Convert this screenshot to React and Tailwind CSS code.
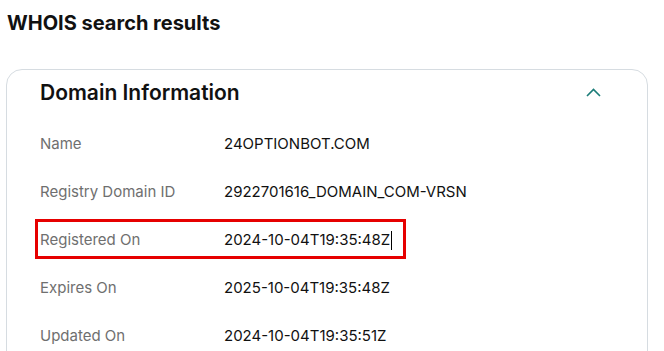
const rows = [
  { label: 'Name', value: '24OPTIONBOT.COM' },
  { label: 'Registry Domain ID', value: '2922701616_DOMAIN_COM-VRSN' },
  { label: 'Registered On', value: '2024-10-04T19:35:48Z', marked: true },
  { label: 'Expires On', value: '2025-10-04T19:35:48Z' },
  { label: 'Updated On', value: '2024-10-04T19:35:51Z' },
]

const App = () => {
  return (
    <div className="w-[664px] h-[351px] overflow-hidden bg-white font-['Inter',sans-serif] text-[#111]">
      {/* Page title */}
      <h1 className="pl-[7px] pt-[11px] text-[20px] leading-[24px] font-bold tracking-[0px]">
        WHOIS search results
      </h1>

      {/* Card */}
      <div className="ml-[6px] mt-[34px] w-[642px] h-[300px] border border-[#d6dce1] rounded-[16px] bg-white">
        <div className="flex items-center justify-between h-[44px] pl-[33px] pr-[46px]">
          <h2 className="text-[21px] font-semibold leading-[28px] mt-[1px]">Domain Information</h2>
          <svg width="15" height="9" viewBox="0 0 15 9" className="mt-[1px]">
            <polyline points="1,8 7.5,1.5 14,8" fill="none" stroke="#1b7c78" strokeWidth="1.6" />
          </svg>
        </div>

        <div className="mt-[6px]">
          {rows.map((row) => (
            <div key={row.label} className="relative flex items-center h-[48px] pl-[33px] text-[15px]">
              <span className="w-[184px] text-[#6f6f6f]">{row.label}</span>
              <span className="text-[#111] flex items-center">
                {row.value}
                {row.marked && <span className="ml-[1px] w-px h-[19px] bg-black" />}
              </span>
              {row.marked && (
                <div className="absolute left-[28px] top-[3px] w-[371px] h-[40px] border-[3px] border-[#e60000]" />
              )}
            </div>
          ))}
        </div>
      </div>
    </div>
  )
}

export default App
